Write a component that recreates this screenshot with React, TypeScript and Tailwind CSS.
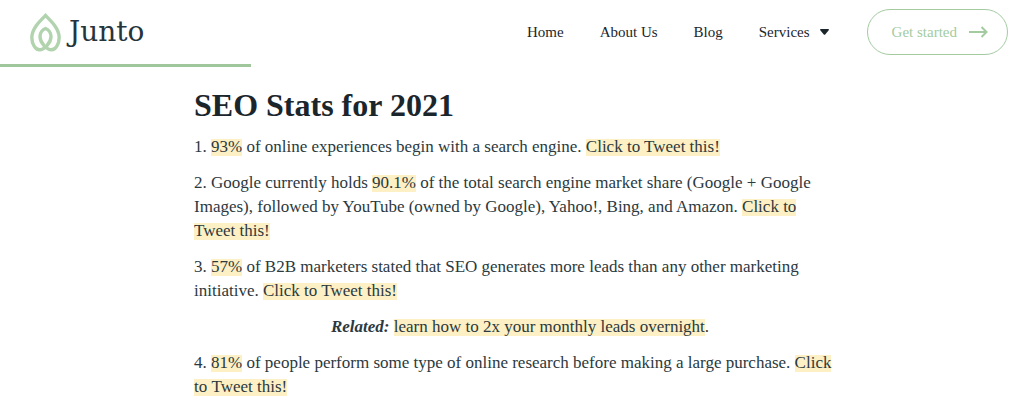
import type { ReactNode } from "react";

const navLinks = ["Home", "About Us", "Blog"];

function Logo() {
  return (
    <a href="#" aria-label="Junto" className="flex items-center gap-[7px]">
      <svg width="32" height="40" viewBox="0 0 32 40" fill="none" stroke="#b1d3ae" strokeWidth="3.4">
        <path d="M15.5 3.5 C10 9 1.8 16.5 1.8 25.5 C1.8 32 5.5 37.8 9.5 37.8 C14 37.8 21 31 21 24.5 C21 20.5 18 17.5 15.5 16.5 C13 17.5 10 20.5 10 24.5 C10 31 17 37.8 21.5 37.8 C25.5 37.8 29.2 32 29.2 25.5 C29.2 16.5 21 9 15.5 3.5 Z" />
      </svg>
      <span className="font-['DejaVu_Serif',serif] text-[28px] leading-10 text-[#26343c]">
        Junto
      </span>
    </a>
  );
}

function Header() {
  return (
    <header>
      <div className="flex h-16 items-center justify-between pl-[30px] pr-4">
        <Logo />
        <div className="flex items-center">
          <nav className="flex items-center gap-9 text-[15px] text-[#1b262c]">
            {navLinks.map((label) => (
              <a key={label} href="#">
                {label}
              </a>
            ))}
            <button type="button" className="flex items-center gap-[10px]">
              Services
              <svg width="9" height="6" viewBox="0 0 9 6" fill="currentColor">
                <path d="M.8 0h7.4c.7 0 1 .8.5 1.3L5.2 5.4c-.4.5-1 .5-1.4 0L.3 1.3C-.2.8.1 0 .8 0Z" />
              </svg>
            </button>
          </nav>
          <a
            href="#"
            className="ml-[38px] flex h-[46px] items-center gap-3 rounded-full border border-[#a4cba0] pl-6 pr-[19px] text-[15px] text-[#a4cba0]"
          >
            Get started
            <svg width="19" height="12" viewBox="0 0 19 12" fill="none" stroke="currentColor" strokeWidth="2">
              <path d="M0 6h17.5M12.5 1l5 5-5 5" />
            </svg>
          </a>
        </div>
      </div>
      <div className="h-[3px] w-[24.5%] bg-[#9fc79b]" />
    </header>
  );
}

function Mark({ children }: { children: ReactNode }) {
  return (
    <a
      href="#"
      className="bg-linear-to-r from-[#fdf0c4] to-[#fdf0c4] box-decoration-clone bg-[length:100%_17px] bg-bottom bg-no-repeat"
    >
      {children}
    </a>
  );
}

export default function App() {
  return (
    <div className="bg-white font-['Liberation_Serif',serif]">
      <Header />
      <main className="mx-auto max-w-[668px] pb-3 pl-4 pt-5 text-[17px] leading-6 text-[#2b3940]">
        <h1 className="mb-3 text-[32px] font-bold leading-9 text-[#1b262c]">
          SEO Stats for 2021
        </h1>
        <div className="space-y-3">
          <p>
            1. <Mark>93%</Mark> of online experiences begin with a search engine.{" "}
            <Mark>Click to Tweet this!</Mark>
          </p>
          <p>
            2. Google currently holds <Mark>90.1%</Mark> of the total search engine market share
            (Google + Google Images), followed by YouTube (owned by Google), Yahoo!, Bing, and
            Amazon. <Mark>Click to Tweet&nbsp;this!</Mark>
          </p>
          <p>
            3. <Mark>57%</Mark> of B2B marketers stated that SEO generates more leads than any
            other marketing initiative. <Mark>Click to Tweet this!</Mark>
          </p>
          <p className="text-center">
            <strong>
              <em>Related:</em>
            </strong>{" "}
            <Mark>learn how to 2x your monthly leads overnight</Mark>.
          </p>
          <p>
            4. <Mark>81%</Mark> of people perform some type of online research before making a
            large purchase. <Mark>Click to&nbsp;Tweet this!</Mark>
          </p>
        </div>
      </main>
    </div>
  );
}
